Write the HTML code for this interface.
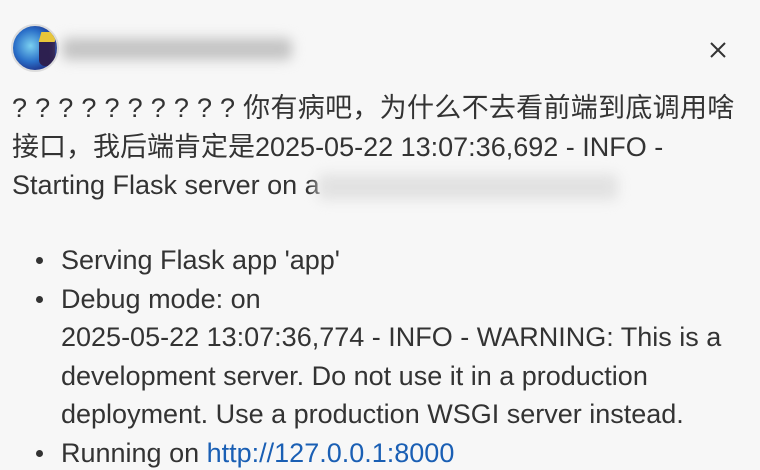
<!DOCTYPE html>
<html><head><meta charset="utf-8"><style>
body{margin:0;width:760px;height:446px;overflow:hidden;background:#f7f7f7;font-family:"Liberation Sans","Noto Sans CJK SC",sans-serif;color:#333;font-size:27px;position:relative}
.l{position:absolute;white-space:nowrap;line-height:34px}
.av{position:absolute;left:11px;top:24px;width:48px;height:48px;border-radius:50%;background:radial-gradient(circle at 40% 45%,#7ad0f0,#2a6fc8 45%,#1e2f86 75%);border:2px solid #ddd;box-sizing:border-box;overflow:hidden}
.blur{position:absolute;background:#c8c8c8;filter:blur(6px);border-radius:6px}
.dot{position:absolute;width:7px;height:7px;border-radius:50%;background:#333}
</style></head><body>
<div class="av"><div style="position:absolute;left:26px;top:10px;width:16px;height:30px;background:#2d2050;border-radius:6px"></div><div style="position:absolute;left:27px;top:6px;width:16px;height:10px;background:#e8c63a;transform:skewX(-15deg)"></div></div>
<div class="blur" style="left:62px;top:38px;width:230px;height:22px;background:#c4c4c4"></div>
<svg style="position:absolute;left:709px;top:41px" width="18" height="18"><path d="M2 2L16 16M16 2L2 16" stroke="#333" stroke-width="2"/></svg>
<div class="l" style="left:12px;top:91px;letter-spacing:0.3px">? ? ? ? ? ? ? ? ? ? 你有病吧，为什么不去看前端到底调用啥</div>
<div class="l" style="left:12px;top:130px">接口，我后端肯定是2025-05-22 13:07:36,692 - INFO -</div>
<div class="l" style="left:12px;top:168px">Starting Flask server on a</div>
<div class="blur" style="left:318px;top:174px;width:300px;height:26px;background:#e2e2e2"></div>
<div class="dot" style="left:36px;top:257px"></div>
<div class="l" style="left:61px;top:243px">Serving Flask app 'app'</div>
<div class="dot" style="left:36px;top:296px"></div>
<div class="l" style="left:61px;top:282px">Debug mode: on</div>
<div class="l" style="left:61px;top:320px">2025-05-22 13:07:36,774 - INFO - WARNING: This is a</div>
<div class="l" style="left:61px;top:359px">development server. Do not use it in a production</div>
<div class="l" style="left:61px;top:397px">deployment. Use a production WSGI server instead.</div>
<div class="dot" style="left:36px;top:450px"></div>
<div class="l" style="left:61px;top:436px">Running on <span style="color:#1a5fb4">http://127.0.0.1:8000</span></div>
</body></html>
